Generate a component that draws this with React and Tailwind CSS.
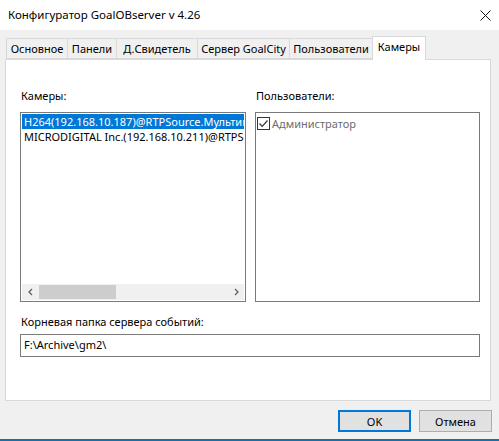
import React from "react";

const tabs = [
  { label: "Основное", w: "w-[61px]" },
  { label: "Панели", w: "w-[49px]" },
  { label: "Д.Свидетель", w: "w-[81px]" },
  { label: "Сервер GoalCity", w: "w-[92px]" },
  { label: "Пользователи", w: "w-[83px]" },
];

const cameras = [
  "H264(192.168.10.187)@RTPSource.Мультимедиа",
  "MICRODIGITAL Inc.(192.168.10.211)@RTPSource",
];

const ArrowLeft = () => (
  <svg width="8" height="8" viewBox="0 0 8 8">
    <path d="M5 1 L2 4 L5 7" fill="none" stroke="#606060" strokeWidth="1.3" />
  </svg>
);

const ArrowRight = () => (
  <svg width="8" height="8" viewBox="0 0 8 8">
    <path d="M3 1 L6 4 L3 7" fill="none" stroke="#606060" strokeWidth="1.3" />
  </svg>
);

export default function App() {
  return (
    <div
      className="w-[499px] h-[441px] bg-[#f0f0f0] flex flex-col text-[11px] text-black overflow-hidden"
      style={{ fontFamily: '"Noto Sans", "Open Sans", sans-serif' }}
    >
      {/* title bar */}
      <div className="h-[30px] bg-white flex items-center justify-between pl-2 pr-[8px] shrink-0">
        <span className="text-[11.5px] leading-none">Конфигуратор GoalOBserver v 4.26</span>
        <svg width="11" height="11" viewBox="0 0 11 11">
          <path d="M0.5 0.5 L10.5 10.5 M10.5 0.5 L0.5 10.5" stroke="#111" strokeWidth="1" />
        </svg>
      </div>

      {/* tab strip */}
      <div className="flex items-end pl-[6px] h-[29px] shrink-0 relative z-10">
        {tabs.map((t) => (
          <div
            key={t.label}
            className={`${t.w} h-[21px] border border-[#d9d9d9] border-r-0 bg-[#f0f0f0] flex items-center justify-center leading-none whitespace-nowrap`}
          >
            {t.label}
          </div>
        ))}
        <div className="w-[54px] h-[24px] border border-[#d9d9d9] border-b-0 bg-white flex items-start justify-center pt-[4px] leading-none whitespace-nowrap -mb-px">
          Камеры
        </div>
      </div>

      {/* tab page */}
      <div className="ml-[5px] w-[486px] h-[342px] bg-white border border-[#d9d9d9] shrink-0 pl-[14px] pr-[10px] pt-[28px] flex flex-col">
        <div className="flex gap-[9px]">
          <div className="w-[226px] flex flex-col">
            <div className="h-[15px] leading-[15px] pl-px">Камеры:</div>
            <div className="mt-[9px] h-[190px] border border-[#7a7a7a] flex flex-col overflow-hidden">
              <div className="flex-1 pt-px px-px">
                {cameras.map((c, i) => (
                  <div
                    key={c}
                    className={`h-[15px] leading-[15px] whitespace-nowrap overflow-hidden pl-[2px] ${
                      i === 0 ? "bg-[#0078d7] text-white" : ""
                    }`}
                  >
                    {c}
                  </div>
                ))}
              </div>
              <div className="h-[16px] flex items-center bg-[#f0f0f0] mb-px mx-px">
                <div className="w-[17px] flex justify-center">
                  <ArrowLeft />
                </div>
                <div className="w-[77px] h-[14px] bg-[#cdcdcd]" />
                <div className="flex-1" />
                <div className="w-[17px] flex justify-center">
                  <ArrowRight />
                </div>
              </div>
            </div>
          </div>

          <div className="w-[225px] flex flex-col">
            <div className="h-[15px] leading-[15px] pl-px">Пользователи:</div>
            <div className="mt-[9px] h-[190px] border border-[#7a7a7a] pt-[4px] pl-[1px]">
              <div className="flex items-center gap-[2px]">
                <div className="w-[13px] h-[13px] border border-[#333] flex items-center justify-center bg-white">
                  <svg width="11" height="11" viewBox="0 0 11 11">
                    <path d="M1.5 5.5 L4.2 8.3 L9.5 2.5" fill="none" stroke="#333" strokeWidth="1.2" />
                  </svg>
                </div>
                <span className="text-[#6d6d6d] leading-none">Администратор</span>
              </div>
            </div>
          </div>
        </div>

        <div className="mt-[12px] h-[15px] leading-[15px] pl-px">Корневая папка сервера событий:</div>
        <div className="mt-[5px] w-[460px] h-[23px] border border-[#7a7a7a] flex items-center pl-[3px]">
          F:\Archive\gm2\
        </div>
      </div>

      {/* dialog buttons */}
      <div className="flex justify-end gap-[8px] pr-[7px] mt-[9px] shrink-0">
        <button className="w-[73px] h-[22px] bg-[#e1e1e1] border-2 border-[#0078d7] leading-none">OK</button>
        <button className="w-[73px] h-[22px] bg-[#e1e1e1] border border-[#adadad] leading-none">Отмена</button>
      </div>

      <div className="flex-1" />
      <div className="h-[2px] bg-[#1c6ea4] shrink-0" />
    </div>
  );
}
